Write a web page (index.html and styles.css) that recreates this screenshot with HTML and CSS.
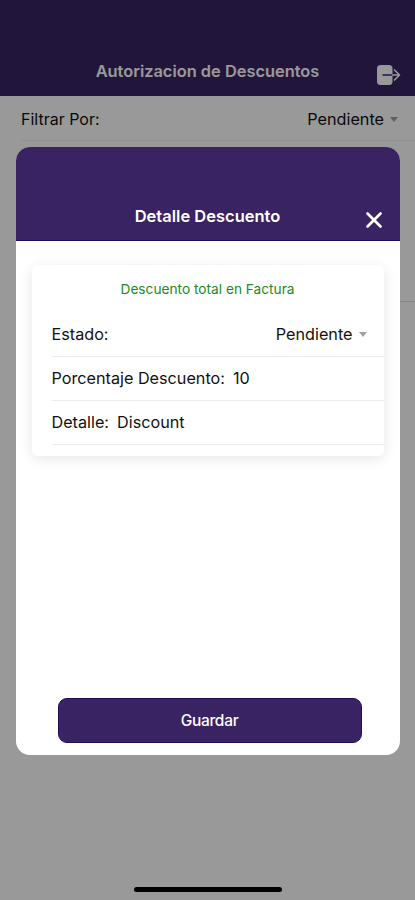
FILE: index.html
```html
<!DOCTYPE html>
<html lang="es">
<head>
    <meta charset="UTF-8">
    <meta name="viewport" content="width=device-width, initial-scale=1.0">
    <title>Autorizacion de Descuentos</title>
    <link rel="stylesheet" href="styles.css">
</head>
<body>
    <div class="pagina">
        <header class="barra">
            <h1 class="barra-titulo">Autorizacion de Descuentos</h1>
            <button class="salir" aria-label="Salir">
                <svg width="26" height="22" viewBox="0 0 26 22">
                    <rect x="2" y="1" width="15.5" height="20" rx="3.5" fill="#fff"/>
                    <path d="M8 11H17.5" stroke="#3a2363" stroke-width="1.5" stroke-linecap="round"/>
                    <path d="M17.5 11h6.5M19.5 6l5 5-5 5" fill="none" stroke="#fff" stroke-width="1.6" stroke-linecap="round" stroke-linejoin="round"/>
                </svg>
            </button>
        </header>
        <div class="filtro">
            <span class="filtro-texto">Filtrar Por:</span>
            <span class="selector"><span class="selector-valor">Pendiente</span><i class="flecha"></i></span>
        </div>
        <div class="elemento"></div>
    </div>

    <div class="fondo">
        <div class="modal">
            <div class="modal-barra">
                <h2 class="modal-titulo">Detalle Descuento</h2>
                <button class="cerrar" aria-label="Cerrar">
                    <svg width="18" height="18" viewBox="0 0 18 18">
                        <path d="M2.5 2.5l13 13M15.5 2.5l-13 13" stroke="#fff" stroke-width="2.7" stroke-linecap="round"/>
                    </svg>
                </button>
            </div>
            <div class="modal-contenido">
                <div class="tarjeta">
                    <p class="tipo">Descuento total en Factura</p>
                    <div class="fila">
                        <span class="estado">Estado:</span>
                        <span class="selector"><span class="selector-valor">Pendiente</span><i class="flecha"></i></span>
                    </div>
                    <div class="fila">
                        <span class="porcentaje">Porcentaje Descuento:</span>
                        <span class="valor">10</span>
                    </div>
                    <div class="fila">
                        <span class="detalle">Detalle:</span>
                        <span class="valor">Discount</span>
                    </div>
                </div>
                <button class="guardar">Guardar</button>
            </div>
        </div>
        <div class="indicador"></div>
    </div>
</body>
</html>
```
FILE: styles.css
```css
* {
    box-sizing: border-box;
}

body {
    font-family: Inter, 'Liberation Sans', sans-serif;
    font-size: 16px;
    margin: 0;
    color: #111;
}

h1, h2, p {
    margin: 0;
}

button {
    padding: 0;
    border: none;
    background: none;
    font-family: inherit;
    cursor: pointer;
}

svg {
    display: block;
}

.pagina {
    height: 900px;
    background: #fff;
    overflow: hidden;
}

.barra {
    display: grid;
    grid-template-columns: 1fr auto 1fr;
    align-items: end;
    height: 96px;
    padding: 0 14px 10px;
    background: #3a2363;
    color: #fff;
}

.barra-titulo {
    grid-column: 2;
    padding-bottom: 5px;
    font-size: 16.4px;
    line-height: 20px;
    font-weight: 600;
}

.salir {
    justify-self: end;
}

.filtro {
    display: flex;
    justify-content: space-between;
    align-items: center;
    height: 45px;
    margin-left: 21px;
    padding: 2px 17px 0 0;
    border-bottom: 1px solid #eee;
}

.elemento {
    height: 161px;
    margin-left: 21px;
    border-bottom: 1px solid #e0e0e0;
}

.selector {
    display: flex;
    align-items: center;
    margin-left: auto;
}

.selector-valor {
    font-size: 16.2px;
}

.flecha {
    margin-left: 6px;
    border: 4.5px solid transparent;
    border-top: 5px solid #a2a2a2;
    border-bottom: none;
}

/* Capa oscura sobre la lista */
.fondo {
    position: absolute;
    inset: 0;
    display: flex;
    flex-direction: column;
    align-items: center;
    height: 900px;
    padding: 147px 0 8px;
    background: rgba(0, 0, 0, 0.4);
}

.modal {
    display: flex;
    flex-direction: column;
    width: 384px;
    height: 608px;
    border-radius: 14px;
    background: #fff;
    overflow: hidden;
}

.modal-barra {
    display: grid;
    grid-template-columns: 1fr auto 1fr;
    align-items: end;
    height: 94px;
    padding: 0 17px 11px;
    background: #3a2363;
    border-bottom: 1px solid #210d55;
    color: #fff;
}

.modal-titulo {
    grid-column: 2;
    padding-bottom: 3px;
    font-size: 16.5px;
    line-height: 20px;
    font-weight: 600;
}

.cerrar {
    justify-self: end;
}

.modal-contenido {
    display: flex;
    flex: 1;
    flex-direction: column;
    padding: 24px 16px 12px;
}

.tarjeta {
    height: 191px;
    padding: 16px 0 0 20px;
    border-radius: 6px;
    background: #fff;
    box-shadow: 0 3px 14px rgba(0, 0, 0, 0.1);
}

.tipo {
    margin-right: 20px;
    color: #228b22;
    font-size: 13.7px;
    line-height: 16px;
    text-align: center;
}

.fila {
    display: flex;
    align-items: center;
    gap: 8px;
    height: 44px;
    padding: 0 17px 1px 0;
    border-bottom: 1px solid #ececec;
    font-size: 16.2px;
}

.tipo + .fila {
    margin-top: 16px;
}

.guardar {
    height: 45px;
    margin: auto 22px 0 26px;
    border: 1px solid #210d55;
    border-radius: 9px;
    background: #3a2363;
    color: #fff;
    font-size: 15.5px;
    font-weight: 500;
    letter-spacing: -0.3px;
}

.indicador {
    width: 148px;
    height: 5px;
    margin-top: auto;
    border-radius: 3px;
    background: #000;
}
```
